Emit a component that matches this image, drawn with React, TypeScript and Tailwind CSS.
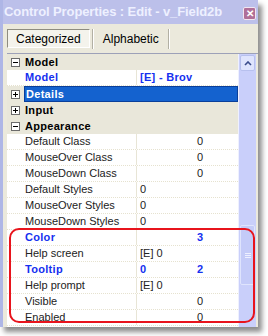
import React from 'react';

type Row = {
  kind: 'cat' | 'prop';
  label: string;
  open?: boolean;
  selected?: boolean;
  blue?: boolean;
  left?: string;
  right?: string;
};

const rows: Row[] = [
  { kind: 'cat', label: 'Model', open: true },
  { kind: 'prop', label: 'Model', blue: true, left: '[E] - Brov' },
  { kind: 'cat', label: 'Details', selected: true },
  { kind: 'cat', label: 'Input' },
  { kind: 'cat', label: 'Appearance', open: true },
  { kind: 'prop', label: 'Default Class', right: '0' },
  { kind: 'prop', label: 'MouseOver Class', right: '0' },
  { kind: 'prop', label: 'MouseDown Class', right: '0' },
  { kind: 'prop', label: 'Default Styles', left: '0' },
  { kind: 'prop', label: 'MouseOver Styles', left: '0' },
  { kind: 'prop', label: 'MouseDown Styles', left: '0' },
  { kind: 'prop', label: 'Color', blue: true, right: '3' },
  { kind: 'prop', label: 'Help screen', left: '[E] 0' },
  { kind: 'prop', label: 'Tooltip', blue: true, left: '0', right: '2' },
  { kind: 'prop', label: 'Help prompt', left: '[E] 0' },
  { kind: 'prop', label: 'Visible', right: '0' },
  { kind: 'prop', label: 'Enabled', right: '0' },
];

// petite case +/- du gutter
function Toggle({ open }: { open?: boolean }) {
  return (
    <div className="w-[9px] h-[9px] border border-[#6b6b6b] bg-white flex items-center justify-center relative">
      <div className="w-[5px] h-px bg-black" />
      {!open && <div className="absolute w-px h-[5px] bg-black" />}
    </div>
  );
}

function GridRow({ row }: { row: Row }) {
  if (row.kind === 'cat') {
    return (
      <div className="h-4 flex bg-[#e9e7da]">
        <div className="w-[17px] flex items-center justify-center">
          <Toggle open={row.open} />
        </div>
        <div
          className={
            'flex-1 flex items-center pl-px font-bold tracking-[0.3px] ' +
            (row.selected ? 'bg-[#1462cf] text-white border border-[#0a3f9a]' : 'text-black')
          }
        >
          {row.label}
        </div>
      </div>
    );
  }
  const tone = row.blue ? 'text-[#1530f0] font-bold tracking-[0.3px]' : 'text-[#222]';
  return (
    <div className="h-4 flex bg-white border-b border-dotted border-[#e6e2cf]">
      <div className="w-[17px]" />
      <div className={'w-[112px] flex items-center pl-px ' + tone}>{row.label}</div>
      <div className="w-px bg-[#e8e5d6]" />
      <div className={'flex-1 flex items-center ' + tone}>
        <div className="w-[60px] pl-[3px]">{row.left}</div>
        <div>{row.right}</div>
      </div>
    </div>
  );
}

export default function App() {
  return (
    <div className="w-[268px] h-[336px] bg-white relative overflow-hidden" style={{ fontFamily: '"Liberation Sans", Arial, sans-serif' }}>
      <div className="w-[258px] h-[327px] flex flex-col bg-[#ebe9dc] border-l-[3px] border-[#aeb6e6] shadow-[4px_5px_5px_rgba(0,0,0,0.45)]">
        {/* barre de titre */}
        <div className="h-[24px] flex items-center justify-between bg-[#bcc0ea] pl-px pr-[2px]">
          <span className="text-[13px] font-bold text-[#eef0ff] tracking-[-0.1px]">Control Properties : Edit - v_Field2b</span>
          <div className="w-[13px] h-[13px] mt-[3px] rounded-[2px] bg-[#b06f98] border border-[#f2e6f0] flex items-center justify-center text-white text-[10px] font-bold leading-none">
            ✕
          </div>
        </div>

        {/* onglets */}
        <div className="h-[29px] flex items-center pl-[4px] text-[12px] text-black">
          <div className="h-[19px] px-[8px] flex items-center bg-[#f4f3ec] border border-t-[#8e8c80] border-l-[#8e8c80] border-r-white border-b-white">
            Categorized
          </div>
          <div className="w-[2px] h-[20px] ml-[2px] border-l border-[#b2b0a4] border-r border-r-white" />
          <div className="px-[9px]">Alphabetic</div>
          <div className="w-[2px] h-[20px] border-l border-[#b2b0a4] border-r border-r-white" />
        </div>

        {/* grille */}
        <div className="flex-1 flex ml-[4px] border-t border-[#9da1b8] text-[11px]">
          <div className="w-[231px] flex flex-col bg-white overflow-hidden">
            {rows.map((r, i) => (
              <GridRow key={i} row={r} />
            ))}
          </div>
          {/* barre de défilement */}
          <div className="w-[18px] flex flex-col bg-[#c9cffa] border-l border-[#eef0ff] px-px pt-px">
            <div className="h-[16px] rounded-[2px] bg-[#dfe4fd] border border-[#b7c0ee] flex items-center justify-center">
              <svg width="8" height="5" viewBox="0 0 8 5">
                <path d="M1 4 L4 1 L7 4" stroke="#3a4c8c" strokeWidth="1.6" fill="none" />
              </svg>
            </div>
            <div className="h-[154px]" />
            <div className="h-[60px] rounded-[2px] bg-[#c4cbf8] border border-[#dfe4fd] flex flex-col items-center justify-center gap-px">
              <div className="w-[6px] h-px bg-[#eef0ff]" />
              <div className="w-[6px] h-px bg-[#eef0ff]" />
              <div className="w-[6px] h-px bg-[#eef0ff]" />
            </div>
          </div>
        </div>
      </div>

      {/* annotation rouge */}
      <div className="absolute left-[9px] top-[228px] w-[246px] h-[95px] border-2 border-[#e8141c] rounded-[10px]" />
    </div>
  );
}
